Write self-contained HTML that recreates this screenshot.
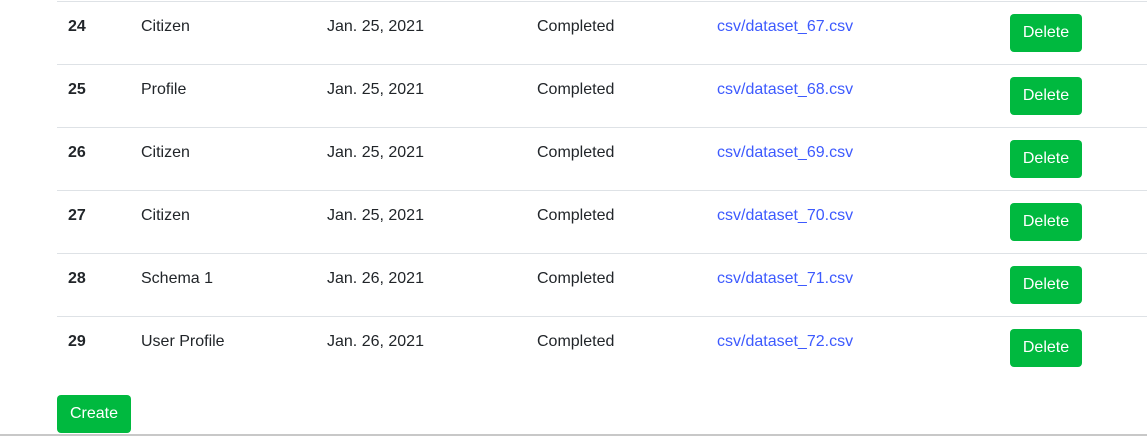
<!DOCTYPE html>
<html><head><style>
body{margin:0;width:1147px;height:436px;overflow:hidden;background:#fff;font-family:"Liberation Sans",sans-serif;font-size:16px;color:#212529;position:relative}
.row{position:absolute;left:57px;width:1100px;height:62px;border-top:1px solid #dee2e6}
.c{position:absolute;top:15px;line-height:19px}
.b{font-weight:bold}
a{color:#3d5afe;text-decoration:none}
.btn{position:absolute;background:#00b93f;color:#fff;border-radius:4px;height:38px;line-height:38px;text-align:center}
</style></head><body>
<div class="row" style="top:1px"><span class="c b" style="left:11px">24</span><span class="c" style="left:84px">Citizen</span><span class="c" style="left:270px">Jan. 25, 2021</span><span class="c" style="left:480px">Completed</span><a class="c" style="left:660px">csv/dataset_67.csv</a><span class="btn" style="left:953px;top:12px;width:72px">Delete</span></div>
<div class="row" style="top:64px"><span class="c b" style="left:11px">25</span><span class="c" style="left:84px">Profile</span><span class="c" style="left:270px">Jan. 25, 2021</span><span class="c" style="left:480px">Completed</span><a class="c" style="left:660px">csv/dataset_68.csv</a><span class="btn" style="left:953px;top:12px;width:72px">Delete</span></div>
<div class="row" style="top:127px"><span class="c b" style="left:11px">26</span><span class="c" style="left:84px">Citizen</span><span class="c" style="left:270px">Jan. 25, 2021</span><span class="c" style="left:480px">Completed</span><a class="c" style="left:660px">csv/dataset_69.csv</a><span class="btn" style="left:953px;top:12px;width:72px">Delete</span></div>
<div class="row" style="top:190px"><span class="c b" style="left:11px">27</span><span class="c" style="left:84px">Citizen</span><span class="c" style="left:270px">Jan. 25, 2021</span><span class="c" style="left:480px">Completed</span><a class="c" style="left:660px">csv/dataset_70.csv</a><span class="btn" style="left:953px;top:12px;width:72px">Delete</span></div>
<div class="row" style="top:253px"><span class="c b" style="left:11px">28</span><span class="c" style="left:84px">Schema 1</span><span class="c" style="left:270px">Jan. 26, 2021</span><span class="c" style="left:480px">Completed</span><a class="c" style="left:660px">csv/dataset_71.csv</a><span class="btn" style="left:953px;top:12px;width:72px">Delete</span></div>
<div class="row" style="top:316px"><span class="c b" style="left:11px">29</span><span class="c" style="left:84px">User Profile</span><span class="c" style="left:270px">Jan. 26, 2021</span><span class="c" style="left:480px">Completed</span><a class="c" style="left:660px">csv/dataset_72.csv</a><span class="btn" style="left:953px;top:12px;width:72px">Delete</span></div>
<span class="btn" style="left:57px;top:395px;width:74px">Create</span>
<div style="position:absolute;left:0;top:434px;width:1147px;height:2px;background:#c8c8c8"></div>
</body></html>
